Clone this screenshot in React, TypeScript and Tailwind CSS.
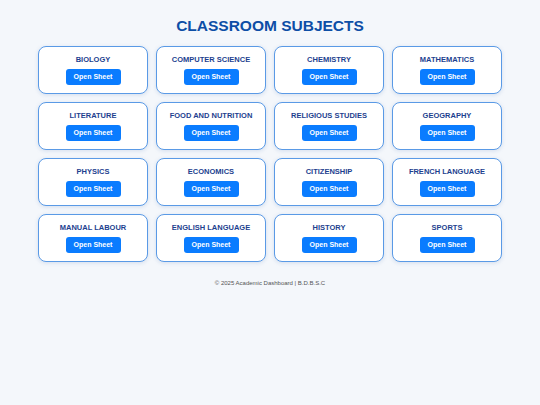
const subjects = [
  "BIOLOGY",
  "COMPUTER SCIENCE",
  "CHEMISTRY",
  "MATHEMATICS",
  "LITERATURE",
  "FOOD AND NUTRITION",
  "RELIGIOUS STUDIES",
  "GEOGRAPHY",
  "PHYSICS",
  "ECONOMICS",
  "CITIZENSHIP",
  "FRENCH LANGUAGE",
  "MANUAL LABOUR",
  "ENGLISH LANGUAGE",
  "HISTORY",
  "SPORTS",
];

export default function App() {
  return (
    <div className="min-h-[405px] w-full bg-[#f4f7fb] font-['Liberation_Sans',Arial,sans-serif]">
      <h1 className="pt-[16px] text-center text-[15.5px] font-bold leading-[19px] text-[#0d4ea6]">
        CLASSROOM SUBJECTS
      </h1>
      <div className="mx-auto mt-[11px] grid w-[464px] grid-cols-4 gap-[8px]">
        {subjects.map((s) => (
          <div
            key={s}
            className="flex h-[48px] flex-col items-center rounded-[8px] border-[1.5px] border-[#5a9ae6] bg-white pt-[8px] shadow-[0_1px_4px_rgba(30,80,160,0.15)]"
          >
            <div className="text-[7.5px] font-bold leading-[10px] text-[#1d3f8f]">{s}</div>
            <button className="mt-[4px] h-[16px] w-[55px] rounded-[3px] bg-[#0a7cff] text-[7px] font-bold leading-[16px] text-white">
              Open Sheet
            </button>
          </div>
        ))}
      </div>
      <p className="mt-[17px] text-center text-[6px] leading-[8px] text-[#555]">
        © 2025 Academic Dashboard | B.D.B.S.C
      </p>
    </div>
  );
}
